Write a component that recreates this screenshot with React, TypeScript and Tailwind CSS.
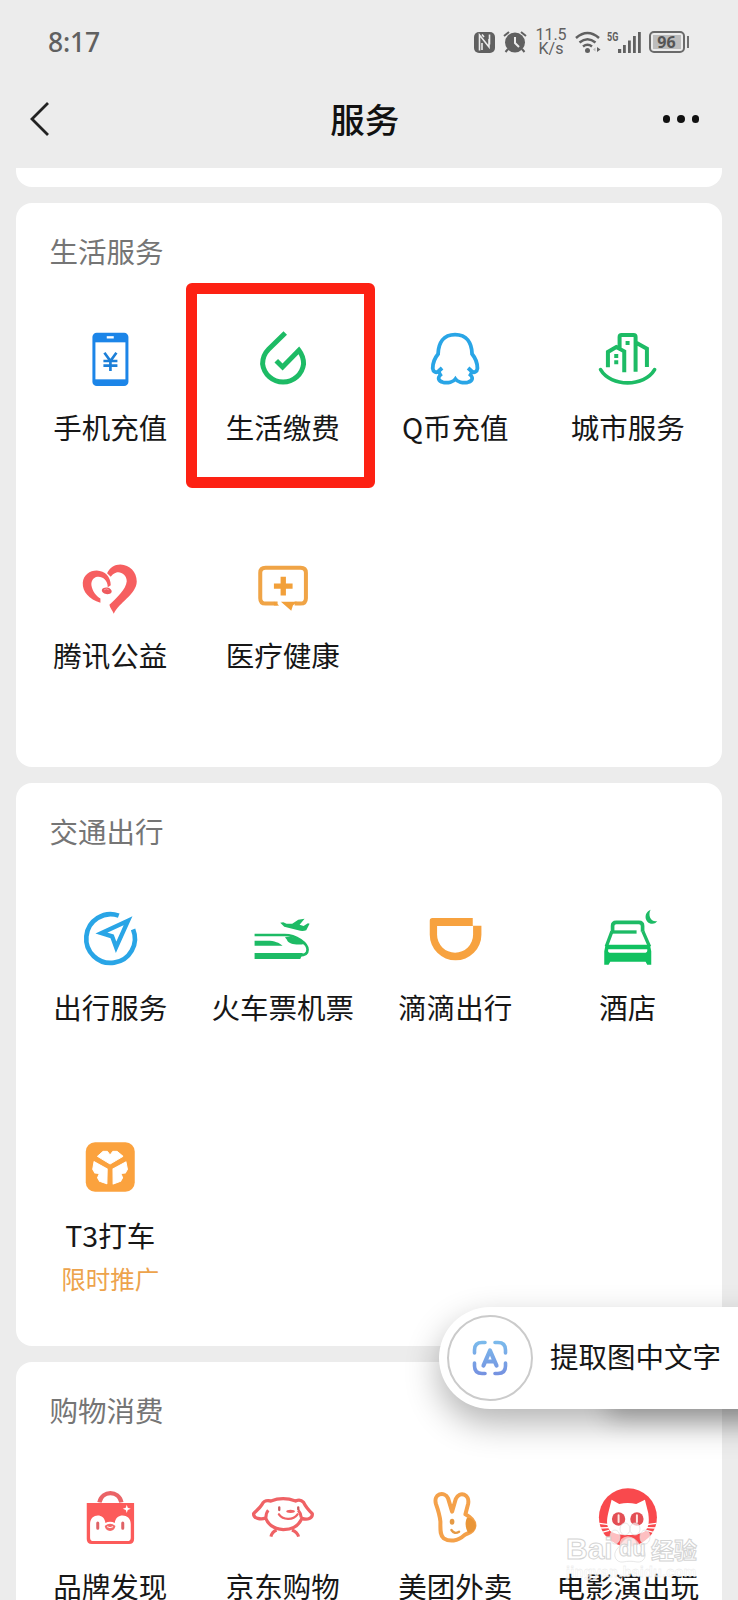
import type { ReactNode } from 'react'

type Service = {
  name: string;
  icon: ReactNode;
  note?: string;
  highlighted?: boolean;
}

type SectionProps = {
  title: string;
  services: Service[];
}

const BLUE = '#29a5e6'
const GREEN = '#1dbb65'
const ORANGE = '#f7a23f'
const RED = '#f65f60'

function Icon({ viewBox, children }: { viewBox: string; children: ReactNode }) {
  return (
    <svg viewBox={viewBox} className="h-[72px] w-[72px] shrink-0" fill="none">
      {children}
    </svg>
  )
}

const PhoneIcon = () => (
  <Icon viewBox="132.75 309 216 216">
    <rect x="188" y="338" width="108" height="160" rx="13" fill="#1c85e8" />
    <rect x="197" y="367" width="90" height="111" fill="#fff" />
    <path d="M231 352h21" stroke="#fff" strokeWidth="7" />
    <path d="M224 398l18 25 18-25M242 422v31M221 423h42M221 437h42" stroke="#1c7fd8" strokeWidth="8" />
  </Icon>
)

const BillIcon = () => (
  <Icon viewBox="650.25 309 216 216">
    <path d="M765 339L715 388C703 400 697 415 697 432A62 62 0 0 0 820 432C820 416 815 403 806 391L757 441L738 422" stroke={GREEN} strokeWidth="15" />
  </Icon>
)

const PenguinIcon = () => (
  <Icon viewBox="147.75 159 216 216">
    <path d="M217 294l-10 9c-8 8-17 2-18-8 0-19 6-31 16-43 1-33 16-58 51-58s50 25 51 58c10 12 16 24 16 43-1 10-10 16-18 8l-10-9" stroke={BLUE} strokeWidth="11.500" />
    <path d="M208 302c-1 6 2 10 4 13-9 8-7 18 8 22 15 3 31-1 37-10 6 9 22 13 37 10 15-4 17-14 8-22 2-3 5-7 4-13" stroke={BLUE} strokeWidth="11" />
  </Icon>
)

const CityIcon = () => (
  <Icon viewBox="665.25 159 216 216">
    <path d="M713 292v-46l25-15 24 13v63M748 234v-33q0-6 6-6h36q6 0 6 6v104M798 218l32 18v55" stroke={GREEN} strokeWidth="12" />
    <path d="M691 299c31 53 131 53 162 0" stroke={GREEN} strokeWidth="11" strokeLinecap="round" />
    <path d="M766 213h12v12h-12zM732 252h12v12h-12zM732 271h12v12h-12z" fill={GREEN} />
  </Icon>
)

const HeartIcon = () => (
  <Icon viewBox="132.75 34.5 216 216">
    <path d="M212 190C178 179 158 158 159 130C161 106 180 93 201 93C226 94 243 112 243 137L234 143C234 122 218 110 203 112C191 114 184 124 185 137C188 156 199 168 212 177Z" fill={RED} />
    <path d="M232 101C240 84 254 75 272 75C300 77 321 97 321 126C320 165 267 189 252 223C249 213 240 206 239 196C260 175 289 150 291 125C291 107 274 95 260 99C250 102 246 108 243 112Z" fill={RED} />
    <ellipse cx="231" cy="154" rx="15" ry="10" transform="rotate(10 231 154)" fill="#ee5a5e" />
    <path d="M223 151q8-6 14 0" stroke="#fbb" strokeWidth="2" />
  </Icon>
)

const MedicalIcon = () => (
  <Icon viewBox="650.25 34.5 216 216">
    <path d="M742 192h-36q-16 0-16-16v-76q0-15 16-15h105q16 0 16 15v76q0 16-16 16h-18" stroke="#f0a446" strokeWidth="12" />
    <path d="M731 186l16 12h-16zM752 187h48l-12 11-5 16z" fill="#f2a03a" />
    <path d="M731 140h56M759 112v56" stroke="#f2a03a" strokeWidth="16" />
  </Icon>
)

const TravelIcon = () => (
  <Icon viewBox="134.75 399 216 216">
    <path d="M269 437A73 73 0 1 0 312 478" stroke={BLUE} strokeWidth="14" />
    <path d="M297 452L217 489L249 499L261 532Z" stroke={BLUE} strokeWidth="13" />
  </Icon>
)

const TrainIcon = () => (
  <Icon viewBox="652.25 399 216 216">
    <path d="M675 495h90c36 0 69 26 69 44 0 13-12 17-24 17" stroke={GREEN} strokeWidth="8" />
    <path d="M675 512h38c22 0 36 6 46 15h-84zM675 549h145l-8 18H675zM766 502c22-6 46 4 58 20-20 4-48 1-52-13z" fill={GREEN} />
    <path d="M752 458l9-1 10 4h17l18-12 19-3-15 18 12 4 13-8 5 1-10 20c-7 3-16 3-24 0l-42-11z" fill={GREEN} />
  </Icon>
)

const DidiIcon = () => (
  <Icon viewBox="147.75 69 216 216">
    <path fillRule="evenodd" d="M188 114H309V137H335V164A77.500 77 0 0 1 180 164V122Q180 114 188 114ZM202 138V164A54 54 0 0 0 310 164V138Z" fill={ORANGE} />
  </Icon>
)

const HotelIcon = () => (
  <Icon viewBox="665.25 67 216 216">
    <path d="M727 153v-17q0-11 11-11h68q11 0 11 11v17" stroke={GREEN} strokeWidth="11" />
    <path d="M725 154h74" stroke={GREEN} strokeWidth="10" />
    <path d="M725 152l-17 46M818 152l20 46M712 198h122" stroke={GREEN} strokeWidth="10" />
    <path fillRule="evenodd" d="M706 192h133l4 20v40h-12l-5-9H720l-5 9h-13v-40zM714 206q-2 10 4 10h108q6 0 5-10z" fill="#10c160" />
    <path d="M841 87c-23 9-18 42 5 42 8 0 12-3 15-8-19 4-29-16-20-34z" fill={GREEN} />
  </Icon>
)

const T3Icon = () => {
  const petal = 'M293 109L310 94H323L331 105L339 94H352L370 109L331 132Z'
  return (
    <Icon viewBox="222.75 33 216 216">
      <rect x="258" y="67" width="147" height="148" rx="28" fill="#fba23e" />
      <g fill="#fff" stroke="#fff" strokeWidth="3" strokeLinejoin="round">
        <path d={petal} />
        <path d={petal} transform="rotate(120 331 142)" />
        <path d={petal} transform="rotate(240 331 142)" />
      </g>
    </Icon>
  )
}

const BrandIcon = () => (
  <Icon viewBox="222.75 309 216 216">
    <path d="M299 370c8-37 58-37 66 0" stroke="#ea6467" strokeWidth="13" />
    <path d="M261 372h142v108q0 15-15 15H276q-15 0-15-15z" fill="#fc5b5a" />
    <path d="M271 435c0-32 43-34 46-3 8-5 20-5 28 0 3-31 48-29 48 3v41q0 10-10 10H281q-10 0-10-10z" fill="#fff" />
    <path d="M294 432v16M369 432v16" stroke="#df6367" strokeWidth="9" strokeLinecap="round" />
    <path d="M315 441q16-14 32 0-2 13-16 15-14-2-16-15z" fill="#f46a69" />
    <path d="M322 443q9 6 18 0" stroke="#fff" strokeWidth="3" />
    <path d="M381 377l3 9 9 3-9 4-3 9-3-9-9-4 9-3z" fill="#fff" />
  </Icon>
)

const DogIcon = () => (
  <Icon viewBox="740.25 309 216 216">
    <path d="M812 366q36-14 74 0 14-7 24 4c6 13 14 22 26 34 2 14-15 20-31 14-13 28-33 33-56 34-25-2-43-10-53-35-14 6-36 2-36-13 4-6 17-14 25-27 5-11 12-14 27-11z" stroke="#ef6265" strokeWidth="10" strokeLinejoin="round" />
    <path d="M797 416q0-14 7-22M903 416q-1-13-9-22M829 453q-14 6-17 20M875 453q16 6 20 20" stroke="#ef6265" strokeWidth="9" />
    <path d="M837 385v8M894 385v6" stroke="#c9595d" strokeWidth="7" strokeLinecap="round" />
    <path d="M836 406c12 17 42 19 56 0" stroke="#ef6265" strokeWidth="7" strokeLinecap="round" />
    <ellipse cx="871" cy="397" rx="13" ry="5" fill="#ef6265" />
  </Icon>
)

const RabbitIcon = () => (
  <Icon viewBox="150.75 69 216 216">
    <path d="M215 188c-2-20-8-38-13-52-10-32 25-41 36-18l12 40 11-38c12-26 43-14 37 15l-8 31c22 12 28 24 27 35-2 20-21 21-31 28-19 18-44 20-61 9-12-9-10-26-10-50z" stroke="#f4a14a" strokeWidth="12" strokeLinejoin="round" />
    <path d="M295 176c13-1 25 10 26 24-1 14-10 19-22 22-10-14-11-34-4-46z" fill="#e99537" />
    <ellipse cx="250" cy="188" rx="7" ry="9" fill="#e59a45" />
    <path d="M248 213q9 14 23 5" stroke="#e59a45" strokeWidth="7" strokeLinecap="round" />
  </Icon>
)

const CatIcon = () => (
  <Icon viewBox="668.25 69 216 216">
    <circle cx="776" cy="175" r="87" fill="#f9494d" />
    <path d="M727 122l23 13q25-6 51 0l26-13 10 40c3 22 3 39-8 53-17 17-90 17-107 0-11-14-10-31-5-53z" fill="#fff" />
    <circle cx="748" cy="180" r="20" fill="#e34e54" />
    <circle cx="803" cy="180" r="20" fill="#e34e54" />
    <path d="M748 169v20M803 169v20" stroke="#ffe6e2" strokeWidth="6" strokeLinecap="round" />
    <path d="M690 193l28 4M692 207l26-1M698 220l22-6M861 193l-28 4M859 207l-26-1M853 220l-22-6" stroke="#fff" strokeWidth="4" />
    <path d="M751 262q-2-28 25-30 27 2 25 30z" fill="#fbb4b4" />
    <path d="M776 251v12" stroke="#e34e54" strokeWidth="5" />
  </Icon>
)

const lifeServices: Service[] = [
  { name: '手机充值', icon: <PhoneIcon /> },
  { name: '生活缴费', icon: <BillIcon />, highlighted: true },
  { name: 'Q币充值', icon: <PenguinIcon /> },
  { name: '城市服务', icon: <CityIcon /> },
  { name: '腾讯公益', icon: <HeartIcon /> },
  { name: '医疗健康', icon: <MedicalIcon /> },
]

const travelServices: Service[] = [
  { name: '出行服务', icon: <TravelIcon /> },
  { name: '火车票机票', icon: <TrainIcon /> },
  { name: '滴滴出行', icon: <DidiIcon /> },
  { name: '酒店', icon: <HotelIcon /> },
  { name: 'T3打车', icon: <T3Icon />, note: '限时推广' },
]

const shoppingServices: Service[] = [
  { name: '品牌发现', icon: <BrandIcon /> },
  { name: '京东购物', icon: <DogIcon /> },
  { name: '美团外卖', icon: <RabbitIcon /> },
  { name: '电影演出玩', icon: <CatIcon /> },
]

function Section({ title, services }: SectionProps) {
  return (
    <section className="h-[563.7px] shrink-0 rounded-2xl bg-white px-2 pt-[28px]">
      <h2 className="pl-[25.5px] text-[28.5px] leading-[40px] text-[#757575]">{title}</h2>
      <div className="mt-[52px] grid grid-cols-4">
        {services.map((service) => (
          <div key={service.name} className="relative flex h-[228.3px] flex-col items-center">
            {service.icon}
            <span className="mt-[12px] whitespace-nowrap text-[28.5px] leading-[40px] text-[#171717]">{service.name}</span>
            {service.note && (
              <span className="mt-[7px] text-[24.5px] leading-[34px] text-[#eda34c]">{service.note}</span>
            )}
            {/* Red frame around the service to tap */}
            {service.highlighted && (
              <div className="absolute -top-[40px] left-[-11px] h-[205px] w-[189px] rounded-md border-[11px] border-[#fd2113]" />
            )}
          </div>
        ))}
      </div>
    </section>
  )
}

function StatusBar() {
  return (
    <div className="flex h-[84px] shrink-0 items-center pr-[49px] pl-[48px] text-[#606060]">
      <span className="font-['Noto_Sans','Noto_Sans_CJK_SC',sans-serif] text-[26.5px] leading-none font-medium tracking-[-0.2px]">8:17</span>
      <div className="ml-auto flex items-center">
        {/* NFC */}
        <svg width="21" height="21" viewBox="0 0 21 21" fill="none">
          <rect width="21" height="21" rx="5" fill="#606060" />
          <path d="M5.500 18.500V3l9.500 12V7M8 2.500l2 2.500M15.500 2.500v10M8 11v7" stroke="#ececec" strokeWidth="1.600" />
        </svg>
        {/* Alarm */}
        <svg className="ml-[8px]" width="24" height="22" viewBox="0 0 24 22" fill="none">
          <circle cx="12" cy="11.500" r="10" fill="#606060" />
          <path d="M1 5l5-4M23 5l-5-4M5 18l-2.500 3M19 18l2.500 3" stroke="#606060" strokeWidth="2" />
          <path d="M12 6v6l4 4" stroke="#ececec" strokeWidth="2" />
        </svg>
        <div className="ml-[9px] flex w-[31px] flex-col items-center font-[Roboto,sans-serif] text-[16px] leading-[14.500px]">
          <span>11.5</span>
          <span>K/s</span>
        </div>
        {/* Wi-Fi */}
        <svg className="ml-[8px]" width="27" height="23" viewBox="0 0 27 23" fill="none">
          <path d="M1 7q11.500-10 23 0M4.500 11.500q8-6.500 16 0M8 15.500q4.500-3.500 9 0" stroke="#606060" strokeWidth="2.500" />
          <circle cx="12.500" cy="19.500" r="2.500" fill="#606060" />
          <path d="M20.500 16.500v4l-2.500-2z" fill="#bbb" />
          <path d="M22 16v5l3.500-2.500z" fill="#606060" />
        </svg>
        <span className="mb-[11px] ml-[5px] w-[11px] origin-left scale-x-75 font-[Roboto,sans-serif] text-[12px] leading-none font-bold">5G</span>
        {/* Signal */}
        <svg width="23" height="22" viewBox="0 0 23 22">
          <path d="M0 18h3.200v4H0zM5 14h2.800v8H5zM10 9.500h2.800V22H10zM15 5h2.800v17H15zM20 1h2.800v21H20z" fill="#606060" />
        </svg>
        {/* Battery */}
        <div className="ml-[8px] flex h-[22px] w-[36px] items-center justify-center rounded-[5px] border-2 border-[#6a6a6a] p-[2px]">
          <span className="flex h-full w-full items-center justify-center bg-[#bdbdbd] font-['Noto_Sans',sans-serif] text-[16px] leading-none font-bold text-[#555]">96</span>
        </div>
        <div className="ml-[2px] h-[12px] w-[2.500px] bg-[#707070]" />
      </div>
    </div>
  )
}

export default function App() {
  return (
    <div className="relative flex h-[1600px] w-[738px] flex-col overflow-hidden bg-[#ececec] font-['Noto_Sans_CJK_SC',sans-serif]">
      <StatusBar />

      <header className="flex h-[84px] shrink-0 items-center pb-[14px]">
        <svg className="ml-[29px]" width="22" height="36" viewBox="0 0 22 36" fill="none">
          <path d="M19 2L3 18l16 16" stroke="#222" strokeWidth="2.800" />
        </svg>
        <h1 className="flex-1 pb-[2px] pl-[16px] text-center text-[34.500px] leading-[48px] font-medium text-[#111]">服务</h1>
        <div className="mr-[39px] flex gap-[7px]">
          <i className="h-[7.500px] w-[7.500px] rounded-full bg-[#111]" />
          <i className="h-[7.500px] w-[7.500px] rounded-full bg-[#111]" />
          <i className="h-[7.500px] w-[7.500px] rounded-full bg-[#111]" />
        </div>
      </header>

      <main className="flex flex-col gap-4 pr-[16px] pl-[16px]">
        {/* Bottom edge of the scrolled card */}
        <div className="h-[19px] shrink-0 rounded-b-2xl bg-white" />
        <Section title="生活服务" services={lifeServices} />
        <Section title="交通出行" services={travelServices} />
        <Section title="购物消费" services={shoppingServices} />
      </main>

      {/* Floating text extraction button */}
      <div className="absolute top-[1306.500px] left-[439px] h-[102.500px] w-[299px]">
        <div className="absolute right-[-40px] bottom-0 h-[60px] w-[170px] shadow-[0_10px_24px_rgba(0,0,0,0.22)]" />
        <div className="relative flex h-full w-[340px] items-center rounded-l-full bg-white pl-[8px] shadow-[0_14px_34px_rgba(0,0,0,0.3)]">
          <div className="flex h-[86px] w-[86px] shrink-0 items-center justify-center rounded-full border-2 border-[#cbcbcb]">
            <svg width="36" height="36" viewBox="0 0 36 36" fill="none">
              <defs>
                <linearGradient id="scan" x1="0" y1="0" x2="0" y2="36" gradientUnits="userSpaceOnUse">
                  <stop stopColor="#7bbcec" />
                  <stop offset="1" stopColor="#7590e0" />
                </linearGradient>
              </defs>
              <path d="M2.500 13V10q0-7.500 7.500-7.500h3M23 2.500h3q7.500 0 7.500 7.500v3M33.500 23v3q0 7.500-7.500 7.500h-3M13 33.500h-3q-7.500 0-7.500-7.500v-3" stroke="url(#scan)" strokeWidth="3.600" strokeLinecap="round" />
              <path d="M11.500 25.500l6.500-15 6.500 15M13.500 21.500h9" stroke="url(#scan)" strokeWidth="4.200" strokeLinecap="round" strokeLinejoin="round" />
            </svg>
          </div>
          <span className="mb-[3px] ml-[17px] text-[28.500px] leading-[40px] text-[#171717]">提取图中文字</span>
        </div>
      </div>

      {/* Watermark */}
      <div className="absolute top-[1522px] left-[566px] w-[131px] text-white">
        <svg className="absolute top-0 left-[43px]" width="42" height="42" viewBox="0 0 42 42" fill="#fff" fillOpacity="0.65" stroke="#ddd" strokeWidth="0.700">
          <ellipse cx="6" cy="15" rx="5" ry="7" />
          <ellipse cx="16" cy="7" rx="5" ry="6" />
          <ellipse cx="26" cy="7" rx="5" ry="6" />
          <ellipse cx="36" cy="15" rx="5" ry="7" />
          <path d="M21 16c7 0 8 6 13 11 5 6 1 14-6 13-5-1-9-1-14 0-7 1-11-7-6-13 5-5 6-11 13-11z" />
        </svg>
        <div className="relative flex items-end pt-[13px] leading-[28px] [-webkit-text-stroke:1px_#d4d4d4]">
          <span className="font-['Liberation_Sans',sans-serif] text-[30px] font-bold">Bai</span>
          <span className="ml-[6px] font-['Liberation_Sans',sans-serif] text-[22px] font-bold">du</span>
          <span className="ml-auto text-[23px] font-bold whitespace-nowrap">经验</span>
        </div>
        <div className="relative mt-[1px] font-['Liberation_Sans',sans-serif] text-[14.500px] leading-[16px] font-bold tracking-[0.2px] opacity-80 [-webkit-text-stroke:0.3px_#ddd]">jingyan.baidu.com</div>
      </div>
    </div>
  )
}
